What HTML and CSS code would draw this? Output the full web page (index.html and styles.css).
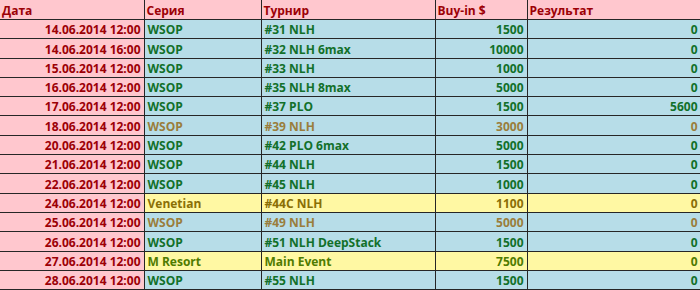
FILE: index.html
```html
<!DOCTYPE html>
<html>
<head>
<meta charset="utf-8">
<link rel="stylesheet" href="styles.css">
</head>
<body>
<table class="sheet">
  <colgroup>
    <col class="c-date"><col class="c-series"><col class="c-tour"><col class="c-buy"><col class="c-res">
  </colgroup>
  <thead>
    <tr><th>Дата</th><th>Серия</th><th>Турнир</th><th>Buy-in $</th><th>Результат</th></tr>
  </thead>
  <tbody>
    <tr class="blue"><td class="date">14.06.2014 12:00</td><td>WSOP</td><td>#31 NLH</td><td class="num">1500</td><td class="num">0</td></tr>
    <tr class="blue"><td class="date">14.06.2014 16:00</td><td>WSOP</td><td>#32 NLH 6max</td><td class="num">10000</td><td class="num">0</td></tr>
    <tr class="blue"><td class="date">15.06.2014 12:00</td><td>WSOP</td><td>#33 NLH</td><td class="num">1000</td><td class="num">0</td></tr>
    <tr class="blue"><td class="date">16.06.2014 12:00</td><td>WSOP</td><td>#35 NLH 8max</td><td class="num">5000</td><td class="num">0</td></tr>
    <tr class="blue"><td class="date">17.06.2014 12:00</td><td>WSOP</td><td>#37 PLO</td><td class="num">1500</td><td class="num">5600</td></tr>
    <tr class="blue brown"><td class="date">18.06.2014 12:00</td><td>WSOP</td><td>#39 NLH</td><td class="num">3000</td><td class="num">0</td></tr>
    <tr class="blue"><td class="date">20.06.2014 12:00</td><td>WSOP</td><td>#42 PLO 6max</td><td class="num">5000</td><td class="num">0</td></tr>
    <tr class="blue"><td class="date">21.06.2014 12:00</td><td>WSOP</td><td>#44 NLH</td><td class="num">1500</td><td class="num">0</td></tr>
    <tr class="blue"><td class="date">22.06.2014 12:00</td><td>WSOP</td><td>#45 NLH</td><td class="num">1000</td><td class="num">0</td></tr>
    <tr class="yellow olive"><td class="date">24.06.2014 12:00</td><td>Venetian</td><td>#44C NLH</td><td class="num">1100</td><td class="num">0</td></tr>
    <tr class="blue brown"><td class="date">25.06.2014 12:00</td><td>WSOP</td><td>#49 NLH</td><td class="num">5000</td><td class="num">0</td></tr>
    <tr class="blue"><td class="date">26.06.2014 12:00</td><td>WSOP</td><td>#51 NLH DeepStack</td><td class="num">1500</td><td class="num">0</td></tr>
    <tr class="yellow lime"><td class="date">27.06.2014 12:00</td><td>M Resort</td><td>Main Event</td><td class="num">7500</td><td class="num">0</td></tr>
    <tr class="blue"><td class="date">28.06.2014 12:00</td><td>WSOP</td><td>#55 NLH</td><td class="num">1500</td><td class="num">0</td></tr>
  </tbody>
</table>
</body>
</html>
```
FILE: styles.css
```css
html, body {
  margin: 0;
  padding: 0;
  background: #ffffff;
}

.sheet {
  border-collapse: collapse;
  table-layout: fixed;
  width: 701px;
  font-family: "Open Sans", "Liberation Sans", sans-serif;
  font-weight: 700;
  font-size: 12px;
  line-height: 1;
}

.c-date { width: 144px; }
.c-series { width: 117px; }
.c-tour { width: 174px; }
.c-buy { width: 92px; }
.c-res { width: 174px; }

.sheet th,
.sheet td {
  border-right: 1px solid #262626;
  border-bottom: 1px solid #262626;
  padding: 0 3px 2px 3px;
  vertical-align: bottom;
  white-space: nowrap;
  overflow: hidden;
}

.sheet th {
  height: 17px;
  background: #ffc7ce;
  color: #9c0006;
  text-align: left;
  padding-left: 2px;
}

.sheet td {
  height: 16.3px;
}

.sheet td.date {
  background: #ffc7ce;
  color: #9c0006;
  text-align: right;
}

.sheet td.num {
  text-align: right;
}

.blue td {
  background: #b7dde8;
  color: #12702a;
}

.yellow td {
  background: #fff8a3;
}

.brown td {
  color: #9a7d3c;
}

.olive td {
  color: #8a6f06;
}

.lime td {
  color: #4f7b00;
}
```
